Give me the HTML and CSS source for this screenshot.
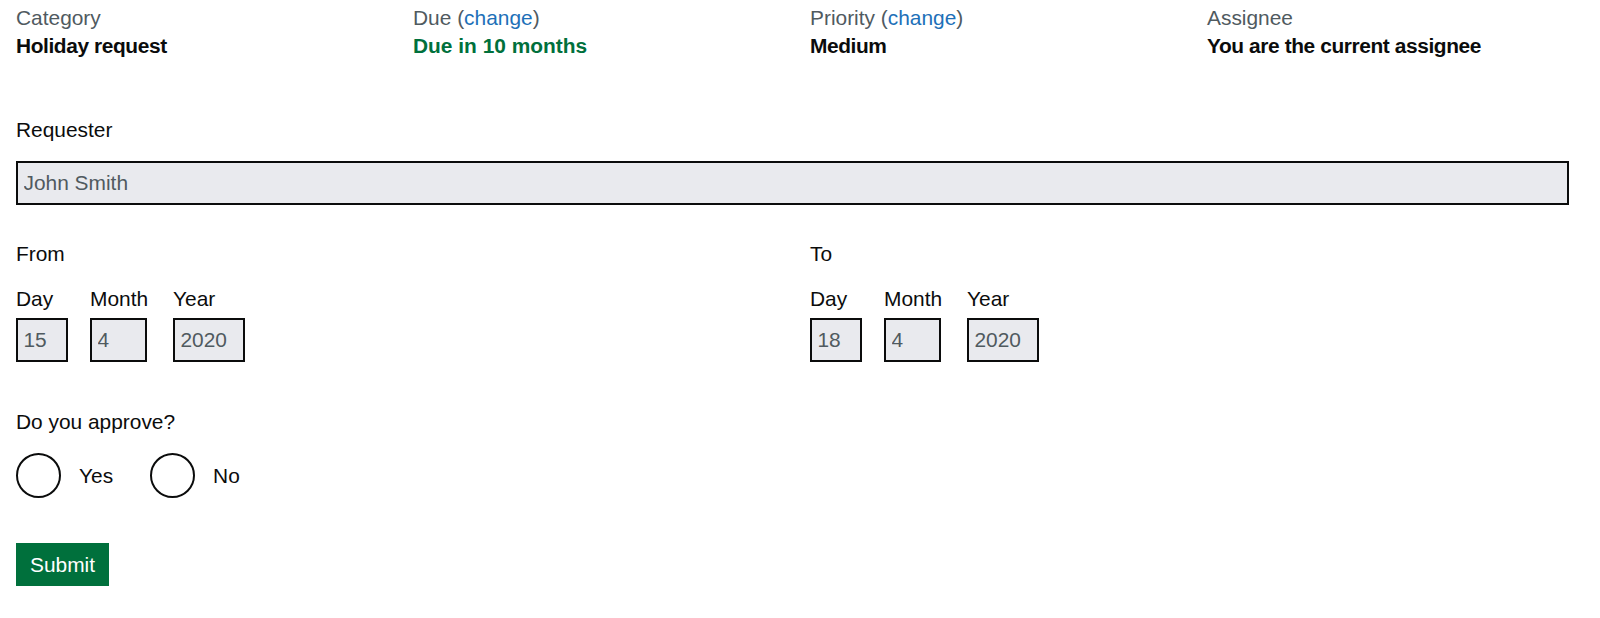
FILE: index.html
```html
<!DOCTYPE html>
<html lang="en">
<head>
<meta charset="utf-8">
<title>Holiday request</title>
<link rel="stylesheet" href="styles.css">
</head>
<body>
<div class="page">
  <dl class="summary">
    <div class="summary-item">
      <dt class="summary-key">Category</dt>
      <dd class="summary-value">Holiday request</dd>
    </div>
    <div class="summary-item">
      <dt class="summary-key">Due (<a class="link" href="#">change</a>)</dt>
      <dd class="summary-value summary-value--green">Due in 10 months</dd>
    </div>
    <div class="summary-item">
      <dt class="summary-key">Priority (<a class="link" href="#">change</a>)</dt>
      <dd class="summary-value">Medium</dd>
    </div>
    <div class="summary-item">
      <dt class="summary-key">Assignee</dt>
      <dd class="summary-value">You are the current assignee</dd>
    </div>
  </dl>

  <form class="form">
    <div class="form-group form-group--requester">
      <label class="label label--requester" for="requester">Requester</label>
      <input class="input input--full" id="requester" type="text" value="John Smith" disabled>
    </div>

    <div class="dates">
      <fieldset class="fieldset">
        <legend class="legend">From</legend>
        <div class="date-input">
          <div class="date-item">
            <label class="label label--date" for="from-day">Day</label>
            <input class="input input--day" id="from-day" type="text" value="15" disabled>
          </div>
          <div class="date-item date-item--month">
            <label class="label label--date" for="from-month">Month</label>
            <input class="input input--month" id="from-month" type="text" value="4" disabled>
          </div>
          <div class="date-item">
            <label class="label label--date" for="from-year">Year</label>
            <input class="input input--year" id="from-year" type="text" value="2020" disabled>
          </div>
        </div>
      </fieldset>
      <fieldset class="fieldset">
        <legend class="legend">To</legend>
        <div class="date-input">
          <div class="date-item">
            <label class="label label--date" for="to-day">Day</label>
            <input class="input input--day" id="to-day" type="text" value="18" disabled>
          </div>
          <div class="date-item date-item--month">
            <label class="label label--date" for="to-month">Month</label>
            <input class="input input--month" id="to-month" type="text" value="4" disabled>
          </div>
          <div class="date-item">
            <label class="label label--date" for="to-year">Year</label>
            <input class="input input--year" id="to-year" type="text" value="2020" disabled>
          </div>
        </div>
      </fieldset>
    </div>

    <fieldset class="fieldset fieldset--approve">
      <legend class="legend legend--approve">Do you approve?</legend>
      <div class="radios">
        <div class="radio-item">
          <input class="radio" id="approve-yes" name="approve" type="radio" value="yes">
          <label class="radio-label" for="approve-yes">Yes</label>
        </div>
        <div class="radio-item">
          <input class="radio" id="approve-no" name="approve" type="radio" value="no">
          <label class="radio-label" for="approve-no">No</label>
        </div>
      </div>
    </fieldset>

    <button class="button" type="submit">Submit</button>
  </form>
</div>
</body>
</html>
```

FILE: styles.css
```css
* {
  box-sizing: border-box;
}

html, body {
  margin: 0;
  padding: 0;
  background: #ffffff;
}

body {
  font-family: "Liberation Sans", Arial, sans-serif;
  font-size: 20.9px;
  line-height: 27.5px;
  color: #0b0c0c;
}

.page {
  padding: 4px 16px 0;
}

/* Summary */
.summary {
  margin: 0;
  display: grid;
  grid-template-columns: repeat(4, 1fr);
  column-gap: 20px;
}

.summary-item {
  min-width: 0;
}

.summary-key {
  color: #505a5f;
  margin: 0;
}

.summary-value {
  margin: 0;
  font-weight: 700;
  letter-spacing: -0.4px;
}

.summary-value--green {
  color: #00703c;
  letter-spacing: 0;
}

.link {
  color: #1d70b8;
  text-decoration: none;
}

/* Form */
.form {
  margin: 0;
}

.form-group--requester {
  margin-top: 57px;
}

.label {
  display: block;
}

.label--requester {
  margin-bottom: 17px;
}

.input {
  display: block;
  height: 44px;
  padding: 0 5.5px;
  border: 2px solid #0b0c0c;
  border-radius: 0;
  background: #e9eaee;
  color: #505a5f;
  font-family: inherit;
  font-size: 20.9px;
  line-height: 27.5px;
  opacity: 1;
  -webkit-text-fill-color: #505a5f;
}

.input--full {
  width: calc(100% - 15px);
}

.dates {
  margin-top: 35px;
  display: grid;
  grid-template-columns: 1fr 1fr;
  column-gap: 20px;
}

.fieldset {
  margin: 0;
  padding: 0;
  border: 0;
  min-width: 0;
}

.legend {
  padding: 0;
  margin-bottom: 17.5px;
  float: left;
  width: 100%;
}

.date-input {
  clear: both;
  display: flex;
  gap: 22px;
}

.date-item {
  display: flex;
  flex-direction: column;
}

.date-item--month {
  width: 61px;
}

.label--date {
  margin-bottom: 6px;
}

.input--day {
  width: 52px;
}

.input--month {
  width: 57px;
}

.input--year {
  width: 72px;
}

/* Radios */
.fieldset--approve {
  margin-top: 46px;
}

.legend--approve {
  margin-bottom: 17px;
}

.radios {
  clear: both;
  display: flex;
  gap: 37px;
}

.radio-item {
  display: flex;
  align-items: center;
  gap: 18px;
}

.radio {
  appearance: none;
  -webkit-appearance: none;
  margin: 0;
  width: 45px;
  height: 45px;
  border: 2.2px solid #0b0c0c;
  border-radius: 50%;
  background: #ffffff;
}

.radio-label {
  padding-top: 2px;
}

/* Button */
.button {
  margin-top: 45px;
  display: inline-block;
  padding: 10px 12px 9px;
  border: 2px solid transparent;
  border-radius: 0;
  background: #00703c;
  box-shadow: 0 2px 0 #002d18;
  color: #ffffff;
  font-family: inherit;
  font-size: 20.9px;
  line-height: 1;
  cursor: pointer;
}
```
